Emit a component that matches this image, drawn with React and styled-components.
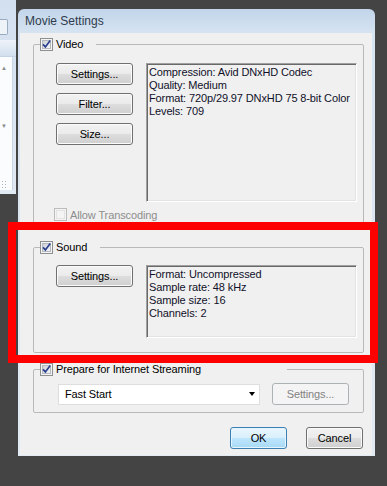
import React from 'react';
import styled, { createGlobalStyle, css } from 'styled-components';

const GlobalStyle = createGlobalStyle`
  html, body {
    margin: 0;
    padding: 0;
    background: #444444;
  }
  body {
    font-family: "Liberation Sans", Arial, sans-serif;
    font-size: 11px;
    letter-spacing: -0.12px;
    color: #000;
  }
  * {
    box-sizing: border-box;
  }
`;

const Screen = styled.div`
  position: relative;
  display: flex;
  align-items: flex-start;
  width: 387px;
  height: 486px;
  overflow: hidden;
  background: #444444;
`;

/* window peeking out behind the dialog */
const BackWindow = styled.div`
  display: flex;
  flex-direction: column;
  width: 16px;
  height: 194px;
  padding-top: 19px;
  background: linear-gradient(#d3e0ef, #e1e9f3);
`;

const SearchBox = styled.div`
  width: 8px;
  height: 16px;
  border: 1px solid #9aabbf;
  border-left: none;
  border-radius: 0 2px 2px 0;
  background: #eef3f8;
`;

const HeaderBand = styled.div`
  height: 17px;
  margin-top: 5px;
  background: linear-gradient(#eef3f9, #d2dfee);
  border-bottom: 1px solid #c4d3e4;
`;

const ListArea = styled.div`
  display: flex;
  flex-direction: column;
  justify-content: space-between;
  flex: 1;
  margin: 0 3px 4px 0;
  padding: 8px 0 2px 1px;
  background: #fbfcfd;
  border-right: 1px solid #c9d6e5;
  color: #8a8a8a;
  font-size: 6px;
  line-height: 7px;
`;

const Grip = styled.div`
  width: 6px;
  height: 8px;
  background-image: radial-gradient(#a8b4c0 0.8px, transparent 1px);
  background-size: 3px 3px;
`;

const Dialog = styled.div`
  display: flex;
  flex-direction: column;
  width: 357px;
  height: 447px;
  margin: 9px 0 0 2px;
  padding: 0 3px 1px 2px;
  border-radius: 6px 6px 0 0;
  background: linear-gradient(#c2d5ea 0px, #d6e3f1 24px, #e2eaf4 100%);
`;

const TitleBar = styled.div`
  display: flex;
  align-items: center;
  height: 24px;
  padding-left: 5px;
  font-size: 12px;
  letter-spacing: 0;
  color: #2e3b4c;
`;

const Client = styled.div`
  display: flex;
  flex-direction: column;
  flex: 1;
  padding: 0 8px 0 13px;
  background: #f0f0f0;
`;

const Group = styled.fieldset`
  margin: ${p => p.$top}px 0 0 0;
  padding: 0;
  min-width: 0;
  border: 1px solid #b9b9b9;
  border-radius: 2px;
`;

const Legend = styled.legend`
  display: flex;
  align-items: center;
  gap: 3px;
  width: ${p => p.$width}px;
  height: 14px;
  margin-left: 6px;
  padding: 0;
  color: ${p => (p.$disabled ? '#8d8d8d' : '#000')};
`;

const GroupBody = styled.div`
  padding: ${p => p.$pad};
`;

const Row = styled.div`
  display: flex;
  align-items: ${p => p.$align || 'flex-start'};
  gap: ${p => p.$gap}px;
`;

const ButtonColumn = styled.div`
  display: flex;
  flex-direction: column;
  gap: 8px;
`;

const Button = styled.button`
  width: ${p => p.$width || 77}px;
  height: 22px;
  padding: 0;
  font-family: inherit;
  font-size: 11px;
  letter-spacing: inherit;
  color: #000;
  border: 1px solid #707070;
  border-radius: 3px;
  box-shadow: inset 0 0 0 1px #fbfbfb;
  background: linear-gradient(#f2f2f2 0%, #ebebeb 48%, #dddddd 52%, #cfcfcf 100%);
  ${p => p.$primary && css`
    border-color: #3c7fb1;
    box-shadow: inset 0 0 0 1px #e6f5fd;
    background: linear-gradient(#eaf6fd 0%, #d9f0fc 48%, #bee6fd 52%, #a7d9f5 100%);
  `}
  ${p => p.disabled && css`
    color: #838383;
    border-color: #adb2b5;
    box-shadow: none;
    background: #f4f4f4;
  `}
`;

const InfoBox = styled.div`
  width: 211px;
  height: ${p => p.$height}px;
  padding: 2px 2px;
  line-height: 13px;
  white-space: nowrap;
  overflow: hidden;
  color: #10112a;
  border-top: 1px solid #a0a0a0;
  border-left: 1px solid #a0a0a0;
  border-bottom: 1px solid #ffffff;
  border-right: 1px solid #ffffff;
  box-shadow: inset 1px 1px 0 #696969, inset -1px -1px 0 #e3e3e3;
`;

const CheckRow = styled.div`
  display: flex;
  align-items: center;
  gap: 3px;
  height: 13px;
  margin: 6px 0 0 -2px;
  color: #8d8d8d;
`;

const Select = styled.div`
  display: flex;
  align-items: center;
  justify-content: space-between;
  width: 202px;
  height: 21px;
  padding: 0 4px 0 6px;
  background: #ffffff;
  border: 1px solid #dedede;
`;

const Arrow = styled.span`
  width: 0;
  height: 0;
  border-left: 3.5px solid transparent;
  border-right: 3.5px solid transparent;
  border-top: 4px solid #000;
`;

const Footer = styled.div`
  display: flex;
  justify-content: flex-end;
  gap: 19px;
  margin-top: 14px;
  padding-right: 1px;
`;

const Highlight = styled.div`
  position: absolute;
  left: 8px;
  top: 222px;
  width: 370px;
  height: 141px;
  border: 8px solid #ff0000;
  pointer-events: none;
`;

const CheckBox = ({ checked, disabled }) => (
  <svg width="13" height="13" viewBox="0 0 13 13" style={{ flex: 'none' }}>
    <defs>
      <linearGradient id="cbFill" x1="0" y1="0" x2="1" y2="1">
        <stop offset="0" stopColor="#cbcfd5" />
        <stop offset="1" stopColor="#f7f7f7" />
      </linearGradient>
    </defs>
    <rect x="0.5" y="0.5" width="12" height="12" fill="#f4f4f4" stroke={disabled ? '#bcbcbc' : '#8e8f8f'} />
    {!disabled && <rect x="2.5" y="2.5" width="8" height="8" fill="url(#cbFill)" stroke="#b4b9bf" />}
    {disabled && <rect x="2.5" y="2.5" width="8" height="8" fill="#f4f4f4" stroke="#e3e3e3" />}
    {checked && (
      <path d="M3 6.3 L5.4 8.9 L10.2 2.6" fill="none" stroke="#2b3f8f" strokeWidth="1.7" />
    )}
  </svg>
);

const App = () => {
  return (
    <Screen>
      <GlobalStyle />
      <BackWindow>
        <SearchBox />
        <HeaderBand />
        <ListArea>
          <span>▲</span>
          <span>▼</span>
          <Grip />
        </ListArea>
      </BackWindow>

      <Dialog>
        <TitleBar>Movie Settings</TitleBar>
        <Client>
          <Group $top={4}>
            <Legend $width={56}>
              <CheckBox checked />
              Video
            </Legend>
            <GroupBody $pad="12px 6px 5px 22px">
              <Row $gap={13}>
                <ButtonColumn>
                  <Button>Settings...</Button>
                  <Button>Filter...</Button>
                  <Button>Size...</Button>
                </ButtonColumn>
                <InfoBox $height={139}>
                  <div>Compression: Avid DNxHD Codec</div>
                  <div>Quality: Medium</div>
                  <div>Format: 720p/29.97 DNxHD 75 8-bit Color</div>
                  <div>Levels: 709</div>
                </InfoBox>
              </Row>
              <CheckRow>
                <CheckBox disabled />
                Allow Transcoding
              </CheckRow>
            </GroupBody>
          </Group>

          <Group $top={13}>
            <Legend $width={60}>
              <CheckBox checked />
              Sound
            </Legend>
            <GroupBody $pad="11px 6px 14px 22px">
              <Row $gap={13}>
                <Button>Settings...</Button>
                <InfoBox $height={73}>
                  <div>Format: Uncompressed</div>
                  <div>Sample rate: 48 kHz</div>
                  <div>Sample size: 16</div>
                  <div>Channels: 2</div>
                </InfoBox>
              </Row>
            </GroupBody>
          </Group>

          <Group $top={9}>
            <Legend $width={247}>
              <CheckBox checked />
              Prepare for Internet Streaming
            </Legend>
            <GroupBody $pad="7px 6px 7px 24px">
              <Row $gap={12} $align="center">
                <Select>
                  <span>Fast Start</span>
                  <Arrow />
                </Select>
                <Button disabled>Settings...</Button>
              </Row>
            </GroupBody>
          </Group>

          <Footer>
            <Button $primary $width={57}>OK</Button>
            <Button $width={57}>Cancel</Button>
          </Footer>
        </Client>
      </Dialog>

      <Highlight />
    </Screen>
  );
};

export default App;
